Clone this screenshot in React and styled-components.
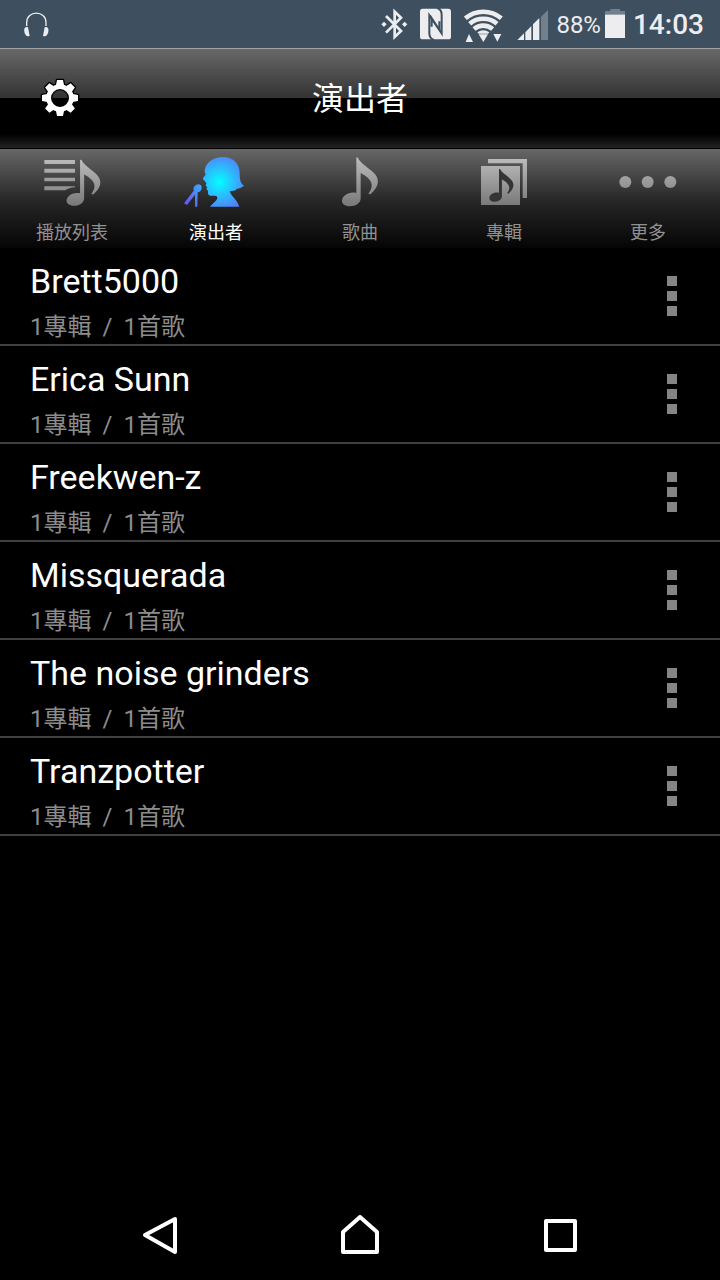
import React from "react";
import styled, { createGlobalStyle } from "styled-components";

const GlobalStyle = createGlobalStyle`
  * { box-sizing: border-box; }
  body { margin: 0; background: #000; }
  button { border: 0; padding: 0; background: none; color: inherit; font: inherit; cursor: pointer; }
`;

const Screen = styled.div`
  display: flex;
  flex-direction: column;
  min-height: 100vh;
  background: #000;
  color: #fff;
  font-family: Roboto, "Noto Sans CJK TC", sans-serif;
`;

const StatusBar = styled.div`
  display: flex;
  align-items: center;
  justify-content: space-between;
  height: 48px;
  padding: 0 16px 0 24px;
  background: #3e5060;
  color: #ededf0;
`;

const StatusGroup = styled.div`
  display: flex;
  align-items: center;
  gap: ${(p) => (p.$tight ? 4 : 8)}px;
`;

const Percent = styled.span`
  padding-top: 2px;
  font-size: 24px;
  line-height: 28px;
`;

const Clock = styled.time`
  padding-top: 2px;
  font-size: 28px;
  line-height: 32px;
  font-weight: 500;
`;

const Glyph = styled.svg`
  display: block;
  flex: none;
`;

const Header = styled.header`
  display: grid;
  grid-template-columns: 1fr auto 1fr;
  align-items: center;
  height: 101px;
  padding: 0 40px 2px;
  border-top: 1px solid #a5a3a6;
  border-bottom: 1px solid #000;
  background: linear-gradient(#686868 0, #333 49px, #000 49px, #000 85px, #242424 99px);
`;

const IconButton = styled.button`
  width: 40px;
  height: 40px;
`;

const Title = styled.h1`
  margin: 0;
  padding-bottom: 4px;
  font-family: "Noto Sans CJK TC", sans-serif;
  font-size: 32px;
  line-height: 40px;
  font-weight: 400;
`;

const Tabs = styled.nav`
  display: grid;
  grid-template-columns: repeat(5, 1fr);
  background: linear-gradient(#676767, #262626 52px, #050505);
`;

const Tab = styled.button`
  && {
    display: flex;
    flex-direction: column;
    align-items: center;
    gap: 11px;
    padding: 5px 0 7px;
    font-family: "Noto Sans CJK TC", sans-serif;
    font-size: 18px;
    line-height: 20px;
    color: ${(p) => (p.$active ? "#fff" : "#919191")};
  }
`;

const List = styled.ul`
  flex: 1;
  margin: 0;
  padding: 0;
  list-style: none;
`;

const Row = styled.li`
  display: flex;
  align-items: center;
  justify-content: space-between;
  height: 98px;
  padding: 0 28px 0 30px;
  border-bottom: 2px solid #404040;
`;

const Info = styled.div`
  display: flex;
  flex-direction: column;
  gap: 8px;
  padding-top: 14px;
`;

const Name = styled.span`
  font-size: 34px;
  line-height: 40px;
`;

const Counts = styled.span`
  display: flex;
  gap: 11px;
  font-size: 24px;
  line-height: 36px;
  color: #8c8c8c;
`;

const MoreButton = styled.button`
  display: flex;
  flex-direction: column;
  align-items: center;
  gap: 5px;
  width: 40px;
`;

const Block = styled.span`
  width: 10px;
  height: 10px;
  background: #858585;
`;

const SystemBar = styled.nav`
  display: grid;
  grid-template-columns: repeat(3, 1fr);
  justify-items: center;
  align-items: center;
  height: 90px;
  padding: 0 60px;
`;

const NOTE =
  "M97 10L102 11C107 26 134 41 150 57C168 75 166 98 139 121L133 119C150 97 148 77 110 57V133C110 147 96 157 78 157C62 157 54 149 54 141C54 124 76 112 97 117Z";

const Gradients = () => (
  <defs>
    <linearGradient id="silver" gradientUnits="userSpaceOnUse" x1="0" y1="10" x2="0" y2="158">
      <stop offset="0" stopColor="#bdbdbd" />
      <stop offset="1" stopColor="#777" />
    </linearGradient>
    <radialGradient id="glow" gradientUnits="userSpaceOnUse" cx="118" cy="84" r="116">
      <stop offset="0" stopColor="#00ffff" />
      <stop offset="0.5" stopColor="#3aa6ff" />
      <stop offset="1" stopColor="#6a55f0" />
    </radialGradient>
  </defs>
);

const TabGlyph = ({ children }) => (
  <Glyph width="72" height="56" viewBox="0 0 216 168" fill="url(#silver)" aria-hidden="true">
    {children}
  </Glyph>
);

const PlaylistIcon = () => (
  <TabGlyph>
    <Gradients />
    <path d="M25 18H117V30H25ZM25 44H117V56H25ZM25 71H117V82H25ZM25 97H117V100Q98 101 88 109H25Z" />
    <path d={NOTE} transform="translate(41 8) scale(.94)" />
  </TabGlyph>
);

const ArtistIcon = () => (
  <TabGlyph>
    <g fill="url(#glow)">
      <path d="M90 158C98 148 110 142 112 132Q112 125 104 125H91Q82 123 84 110L79 105L82 100L77 95L79 87L68 74L77 61L74 55C72 32 95 9 130 9C160 9 179 30 179 56C179 80 183 91 193 94C187 101 180 104 168 105C174 107 160 112 150 111C150 126 170 132 178 158Z" />
      <path d="M43 97C50 88 65 89 65 100C65 110 59 115 53 115L52 158H45V122L21 153L12 148L41 110C40 104 40 100 43 97Z" />
    </g>
  </TabGlyph>
);

const SongIcon = () => (
  <TabGlyph>
    <path d={NOTE} />
  </TabGlyph>
);

const AlbumIcon = () => (
  <TabGlyph>
    <path d="M60 15H177V132H164V28H60ZM39 36H156V153H39Z" />
    <path d={NOTE} transform="translate(28 38) scale(.67)" fill="#343434" />
  </TabGlyph>
);

const MoreIcon = () => (
  <TabGlyph>
    <circle cx="40" cy="84" r="18" />
    <circle cx="107" cy="84" r="18" />
    <circle cx="175" cy="84" r="18" />
  </TabGlyph>
);

const HeadphonesIcon = () => (
  <Glyph width="25" height="36" viewBox="0 0 75 108" fill="#ededf0" aria-label="耳機">
    <path d="M8 60V50C8 12 66 12 66 50V60" fill="none" stroke="#ededf0" strokeWidth="4" />
    <path d="M12 64L17 90Q9 93 5 87Q-2 76 2 66Q6 62 12 64ZM62 64L57 90Q65 93 69 87Q76 76 72 66Q68 62 62 64Z" />
  </Glyph>
);

const BluetoothIcon = () => (
  <Glyph width="30" height="36" viewBox="0 0 90 108" fill="#ededf0" aria-label="藍牙">
    <path d="M18 30L63 75L44 93V17L63 35L18 80" fill="none" stroke="#ededf0" strokeWidth="8" />
    <path d="M12 47L20 55L12 63L4 55ZM74 47L82 55L74 63L66 55Z" />
  </Glyph>
);

const NfcIcon = () => (
  <Glyph width="36" height="36" viewBox="0 0 108 108" aria-label="NFC">
    <rect x="6" y="8" width="93" height="92" rx="8" fill="#ededf0" />
    <path
      d="M48 102Q34 98 34 82V28L64 72V46M57 6Q71 10 71 26V82L41 36V62"
      fill="none"
      stroke="#3e5060"
      strokeWidth="6"
    />
  </Glyph>
);

const WifiIcon = () => (
  <Glyph width="44" height="36" viewBox="0 0 132 108" fill="#ededf0" aria-label="Wi-Fi">
    <g fill="none" stroke="#ededf0" strokeWidth="14">
      <path d="M10 37A84 84 0 0 1 118 37" />
      <path d="M23 53A64 64 0 0 1 105 53" />
      <path d="M36 69A44 44 0 0 1 92 69" />
    </g>
    <path d="M46 79Q64 66 82 79L78 83H50ZM50 85H78L64 108ZM11 108L21 84L33 108ZM94 84H118L106 107Z" />
  </Glyph>
);

const SignalIcon = () => (
  <Glyph width="34" height="36" viewBox="0 0 102 108" fill="#ededf0" aria-label="訊號">
    <path d="M10 102L30 82V102ZM34 79L52 60V102H34ZM57 55L76 36V102H57Z" />
    <path d="M81 32L102 12V102H81Z" fill="#71808c" />
  </Glyph>
);

const BatteryIcon = () => (
  <Glyph width="20" height="36" viewBox="0 0 60 108" aria-label="電池">
    <path d="M16 9H45V15H60V27H0V15H16Z" fill="#71808c" />
    <path d="M0 26H60V96H0Z" fill="#ededf0" />
  </Glyph>
);

const GearIcon = () => (
  <Glyph width="40" height="40" viewBox="0 0 120 120" aria-hidden="true">
    {["#000", "#fff"].map((color) => (
      <g key={color} fill={color} stroke={color} strokeWidth={color === "#000" ? 8 : 0} strokeLinejoin="round">
        {[0, 45, 90, 135, 180, 225, 270, 315].map((angle) => (
          <path key={angle} d="M51 6H69L73 26H47Z" transform={`rotate(${angle} 60 60)`} />
        ))}
        <path
          fillRule="evenodd"
          d="M60 19A41 41 0 1 0 60 101A41 41 0 1 0 60 19ZM60 33A27 27 0 1 1 60 87A27 27 0 1 1 60 33Z"
        />
      </g>
    ))}
  </Glyph>
);

const SystemGlyph = ({ d }) => (
  <Glyph width="40" height="40" viewBox="0 0 40 40" fill="none" stroke="#fff" strokeWidth="4" strokeLinejoin="round" aria-hidden="true">
    <path d={d} />
  </Glyph>
);

const tabs = [
  { label: "播放列表", Icon: PlaylistIcon },
  { label: "演出者", Icon: ArtistIcon, active: true },
  { label: "歌曲", Icon: SongIcon },
  { label: "專輯", Icon: AlbumIcon },
  { label: "更多", Icon: MoreIcon },
];

const artists = ["Brett5000", "Erica Sunn", "Freekwen-z", "Missquerada", "The noise grinders", "Tranzpotter"];

const systemKeys = [
  { label: "返回", d: "M35 4V37L5 20Z" },
  { label: "主畫面", d: "M3 37V17L20 2L37 17V37Z" },
  { label: "最近使用", d: "M6 6H35V35H6Z" },
];

export default function App() {
  return (
    <Screen>
      <GlobalStyle />
      <StatusBar>
        <HeadphonesIcon />
        <StatusGroup>
          <BluetoothIcon />
          <NfcIcon />
          <WifiIcon />
          <SignalIcon />
          <StatusGroup $tight>
            <Percent>88%</Percent>
            <BatteryIcon />
          </StatusGroup>
          <Clock>14:03</Clock>
        </StatusGroup>
      </StatusBar>
      <Header>
        <IconButton type="button" aria-label="設定">
          <GearIcon />
        </IconButton>
        <Title>演出者</Title>
      </Header>
      <Tabs>
        {tabs.map(({ label, Icon, active }) => (
          <Tab key={label} type="button" $active={active}>
            <Icon />
            {label}
          </Tab>
        ))}
      </Tabs>
      <List>
        {artists.map((name) => (
          <Row key={name}>
            <Info>
              <Name>{name}</Name>
              <Counts>
                <span>1專輯</span>
                <span>/</span>
                <span>1首歌</span>
              </Counts>
            </Info>
            <MoreButton type="button" aria-label={`${name} 選項`}>
              <Block />
              <Block />
              <Block />
            </MoreButton>
          </Row>
        ))}
      </List>
      <SystemBar>
        {systemKeys.map(({ label, d }) => (
          <IconButton key={label} type="button" aria-label={label}>
            <SystemGlyph d={d} />
          </IconButton>
        ))}
      </SystemBar>
    </Screen>
  );
}
